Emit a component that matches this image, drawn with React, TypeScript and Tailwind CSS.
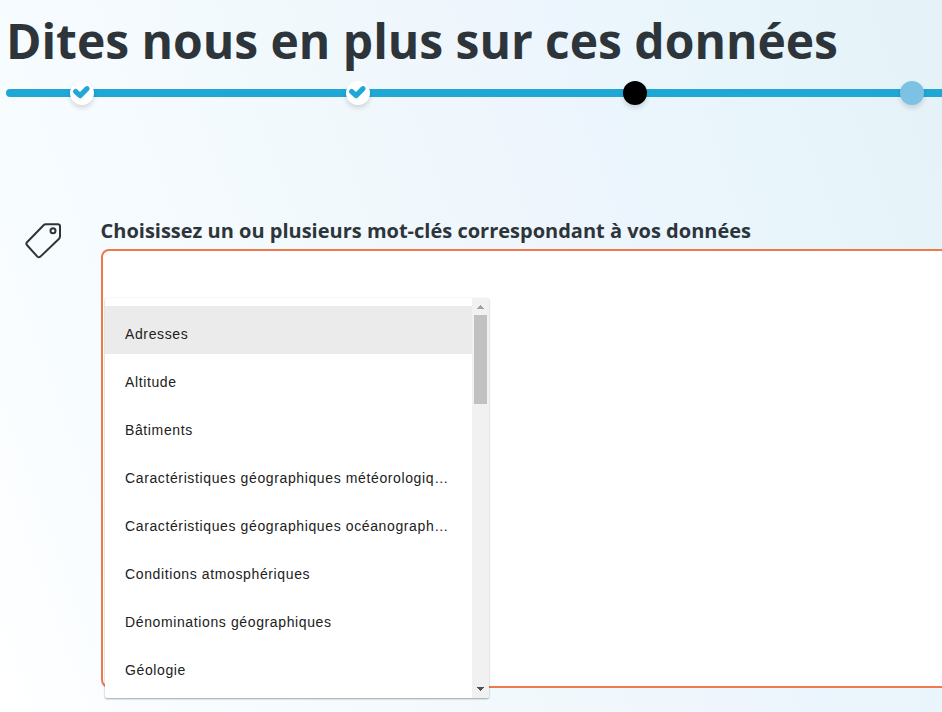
const keywords = [
  "Adresses",
  "Altitude",
  "Bâtiments",
  "Caractéristiques géographiques météorologiq…",
  "Caractéristiques géographiques océanograph…",
  "Conditions atmosphériques",
  "Dénominations géographiques",
  "Géologie",
];

type StepState = "done" | "current" | "next";
const steps: StepState[] = ["done", "done", "current", "next"];

function Step({ state }: { state: StepState }) {
  const color =
    state === "done" ? "bg-white" : state === "current" ? "bg-black" : "bg-[#7ec2e3]";
  return (
    <li
      className={`flex size-6 shrink-0 items-center justify-center rounded-full shadow-[0_3px_5px_rgba(0,0,0,0.14)] ${color}`}
    >
      {state === "done" && (
        <svg viewBox="0 0 24 24" className="size-6" fill="none">
          <path
            d="M5.7 10.6 10.1 14.6 17 7.7"
            stroke="#1fa8d6"
            strokeWidth="5.2"
            strokeLinecap="round"
            strokeLinejoin="round"
          />
        </svg>
      )}
    </li>
  );
}

function Dropdown() {
  return (
    <div className="absolute top-[47px] left-[2px] flex h-[400px] w-[384px] overflow-hidden rounded-[2px] bg-white shadow-[0_1px_2px_rgba(0,0,0,0.35),0_0_1px_rgba(0,0,0,0.12)]">
      <ul className="w-[367px] pt-2 font-['Liberation_Sans',Arial,sans-serif] text-[14px] tracking-[0.62px] text-[#212121]">
        {keywords.map((keyword, i) => (
          <li
            key={keyword}
            className={`h-12 pt-2 pl-5 leading-10 whitespace-nowrap ${i === 0 ? "bg-[#ebebeb]" : ""}`}
          >
            {keyword}
          </li>
        ))}
      </ul>
      <div className="flex w-[17px] flex-col items-center bg-[#f1f1f1]">
        <svg className="h-[17px] w-[17px] shrink-0" viewBox="0 0 17 17" shapeRendering="crispEdges">
          <path d="M5 11h7v-1h-1v-1h-1v-1H9V7H8v1H7v1H6v1H5z" fill="#a3a3a3" />
        </svg>
        <div className="h-[89px] w-[13px] bg-[#c1c1c1]" />
        <svg className="mt-auto h-[17px] w-[17px] shrink-0" viewBox="0 0 17 17" shapeRendering="crispEdges">
          <path d="M5 6h7v1h-1v1h-1v1H9v1H8V9H7V8H6V7H5z" fill="#505050" />
        </svg>
      </div>
    </div>
  );
}

export default function App() {
  return (
    <main className="h-[712px] w-[942px] overflow-hidden bg-[linear-gradient(70deg,#ffffff_0%,#f7fcff_17%,#f2f9fd_42%,#eff7fc_56%,#eef5fd_62%,#ecf5fd_68%,#eaf6fc_73%,#e5f3f9_96%)] font-['Open_Sans',sans-serif] text-[#2d353b]">
      <h1 className="h-[89px] pt-[8px] pl-[6px] text-[48px] leading-[65px] font-bold tracking-[-0.03px] whitespace-nowrap">
        Dites nous en plus sur ces données
      </h1>
      <ol className="ml-[6px] flex h-2 w-[1106px] items-center gap-[252.7px] rounded-full bg-[#1fa8d6] pl-[63.7px]">
        {steps.map((state, i) => (
          <Step key={i} state={state} />
        ))}
      </ol>
      <section className="mt-[120px] flex">
        <div className="w-[101px] shrink-0 pt-[6px] pl-[25px]">
          <svg viewBox="0 0 36 36" className="size-9" fill="none" stroke="#2d353b" strokeWidth="2" strokeLinejoin="round">
            <path d="M20.6 1.2H32.8Q35 1.2 35 3.4V13.2Q35 14.8 33.8 16L15.4 33.6Q13.8 35 12.4 33.6L1.9 22Q.8 20.6 2 19.2L18.8 2Q19.6 1.2 20.6 1.2Z" />
            <circle cx="28" cy="7.7" r="2.5" />
          </svg>
        </div>
        <div className="shrink-0">
          <h2 className="-ml-[0.5px] h-8 text-[20px] leading-[27px] font-bold whitespace-nowrap">
            Choisissez un ou plusieurs mot-clés correspondant à vos données
          </h2>
          <div className="relative h-[439px] w-[1000px] rounded-lg border-2 border-[#f0784a] bg-white">
            <Dropdown />
          </div>
        </div>
      </section>
    </main>
  );
}
